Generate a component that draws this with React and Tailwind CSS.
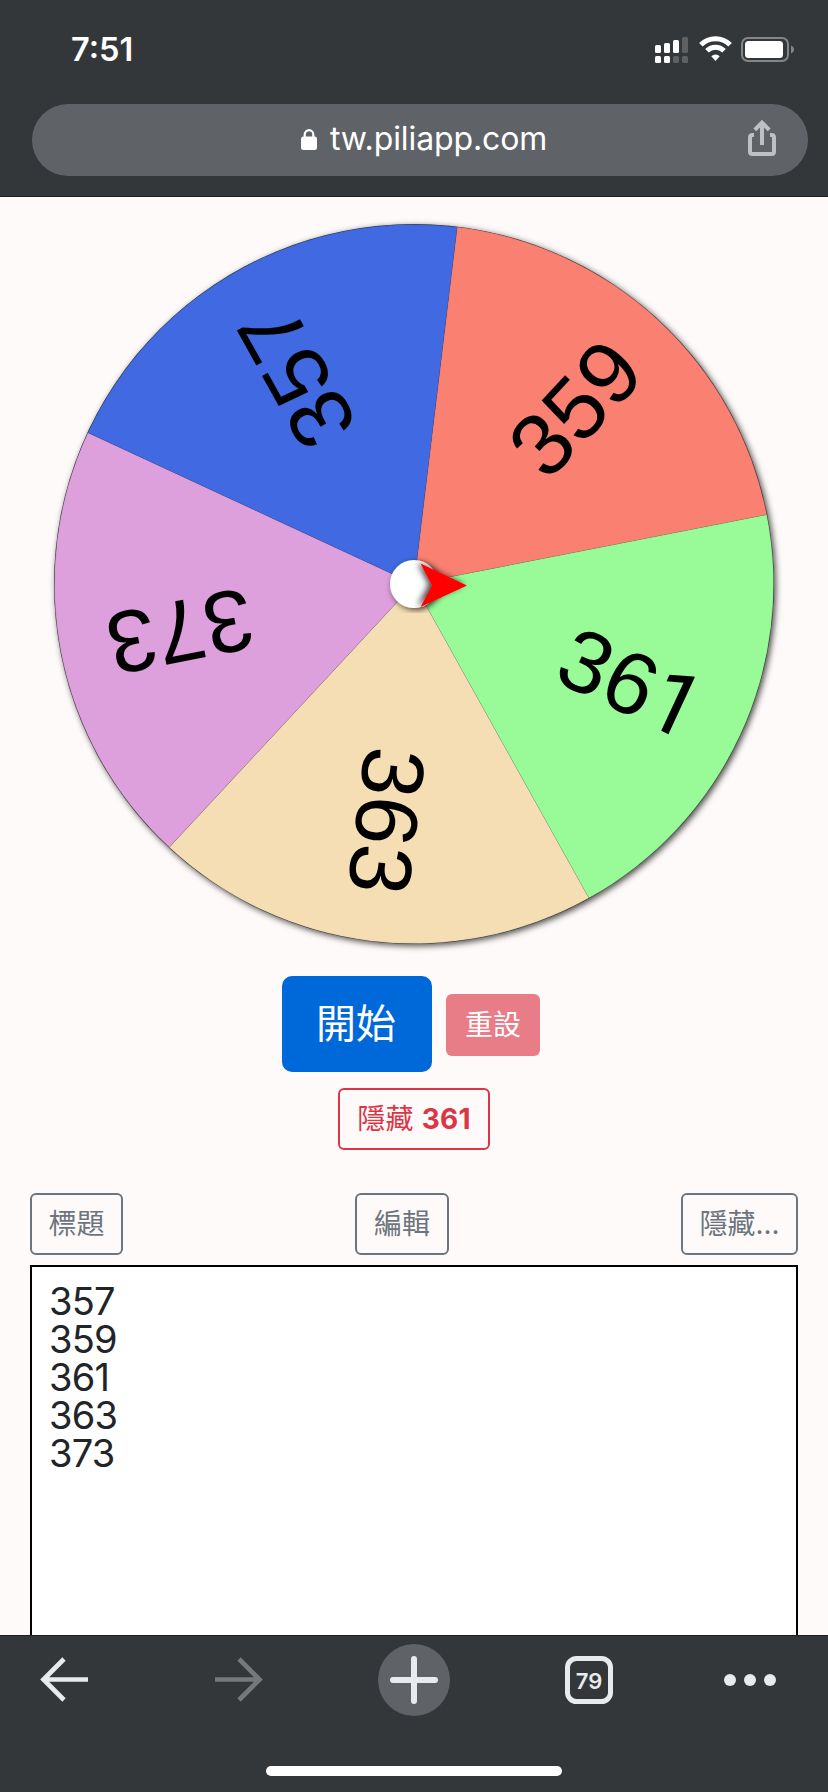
import React, { useState } from "react";

const SLICE_ANGLE = 72;
const START_ANGLE = -83.1;
const RADIUS = 360;
const LABEL_RADIUS = 238.5;

const slices = [
  { label: "359", color: "#fa8072" },
  { label: "361", color: "#98fb98" },
  { label: "363", color: "#f5deb3" },
  { label: "373", color: "#dda0dd" },
  { label: "357", color: "#4169e1" },
];

const polar = (angle, radius) => {
  const rad = (angle * Math.PI) / 180;
  return [radius * Math.cos(rad), radius * Math.sin(rad)];
};

const StatusBar = () => (
  <div className="flex h-[104px] items-start justify-between pl-[71px] pr-[34px]">
    <span className="mt-[30px] text-[32.5px] leading-10 font-semibold text-white">
      7:51
    </span>
    <svg className="mt-[34px]" width="140" height="32" viewBox="0 0 140 32">
      <g fill="#fff">
        <rect x="1" y="11" width="6" height="8" rx="1.5" />
        <rect x="10" y="9" width="6" height="10" rx="1.5" />
        <rect x="19" y="6" width="6" height="13" rx="1.5" />
        <rect x="1" y="22" width="6" height="7" rx="1.5" />
        <rect x="10" y="22" width="6" height="7" rx="1.5" />
      </g>
      <g fill="#5f6062">
        <rect x="28" y="3" width="6" height="16" rx="1.5" />
        <rect x="19" y="22" width="6" height="7" rx="1.5" />
        <rect x="28" y="22" width="6" height="7" rx="1.5" />
      </g>
      <g fill="none" stroke="#fff" strokeWidth="5">
        <path d="M46.900 10.800a20.500 20.500 0 0 1 29.200 0" />
        <path d="M53 16.800a12 12 0 0 1 17 0" />
      </g>
      <path d="M57.300 22.200a6 6 0 0 1 8.400 0L61.500 27z" fill="#fff" />
      <rect
        x="88"
        y="4"
        width="46"
        height="23"
        rx="6"
        fill="none"
        stroke="#838587"
        strokeWidth="2"
      />
      <rect x="91" y="7" width="38" height="17" rx="3.5" fill="#fff" />
      <path d="M137 11.500c4 1.500 4 6.500 0 8z" fill="#838587" />
    </svg>
  </div>
);

const AddressBar = () => (
  <div className="mr-5 ml-8 flex h-[72px] items-center rounded-full bg-[#5f6368]">
    <div className="flex flex-1 items-center gap-[13px] pl-[269px]">
      <svg width="16" height="22" viewBox="0 0 16 22">
        <path
          d="M3.700 10V5.500a4.300 4.300 0 0 1 8.600 0V10"
          fill="none"
          stroke="#fff"
          strokeWidth="2.200"
        />
        <rect y="7.500" width="16" height="13.500" rx="2.500" fill="#fff" />
      </svg>
      <span className="-mt-[2px] text-[32px] leading-10 tracking-[-0.1px] text-white">
        tw.piliapp.com
      </span>
    </div>
    <svg
      className="mr-8 -mt-1"
      width="28"
      height="36"
      viewBox="0 0 28 36"
      fill="none"
      stroke="#bdc1c6"
      strokeWidth="4"
    >
      <path d="M6 15H4.500Q2 15 2 17.500V31.500Q2 34 4.500 34H23.500Q26 34 26 31.500V17.500Q26 15 23.500 15H22" />
      <path d="M14 25V3M6.800 9.800L14 2.600L21.200 9.800" />
    </svg>
  </div>
);

const Wheel = () => (
  <svg
    className="block"
    width="828"
    height="780"
    viewBox="0 196 828 780"
    fontFamily="'Liberation Sans', Arial, sans-serif"
  >
    <defs>
      <filter id="wheelShadow" x="-10%" y="-10%" width="120%" height="120%">
        <feDropShadow
          dx="2"
          dy="2"
          stdDeviation="3"
          floodColor="#000"
          floodOpacity="0.7"
        />
      </filter>
      <filter id="pointerShadow" x="-50%" y="-50%" width="200%" height="200%">
        <feDropShadow
          dx="-3"
          dy="-1"
          stdDeviation="3"
          floodColor="#000"
          floodOpacity="0.75"
        />
      </filter>
    </defs>
    <g transform="translate(414 584)">
      <circle r={RADIUS} fill="#333" filter="url(#wheelShadow)" />
      {slices.map((slice, index) => {
        const from = START_ANGLE + index * SLICE_ANGLE;
        const [x1, y1] = polar(from, RADIUS - 0.5);
        const [x2, y2] = polar(from + SLICE_ANGLE, RADIUS - 0.5);
        return (
          <path
            key={slice.label}
            d={`M0 0L${x1} ${y1}A${RADIUS - 0.5} ${RADIUS - 0.5} 0 0 1 ${x2} ${y2}Z`}
            fill={slice.color}
            stroke="#000"
            strokeOpacity="0.12"
            strokeWidth="0.6"
          />
        );
      })}
      {slices.map((slice, index) => (
        <text
          key={slice.label}
          x={LABEL_RADIUS}
          y="29"
          fontSize="88"
          textAnchor="middle"
          transform={`rotate(${START_ANGLE + (index + 0.5) * SLICE_ANGLE})`}
        >
          {/* Roboto's 1 has no foot */}
          {slice.label.split("").map((digit, i) => (
            <tspan key={i} fontFamily={digit === "1" ? "Roboto" : undefined}>
              {digit}
            </tspan>
          ))}
        </text>
      ))}
      <circle r="24" fill="#fff" filter="url(#wheelShadow)" />
      <path
        d="M6.500 -20.500L53 1.500L6.500 23L18 1.500Z"
        fill="#f00"
        filter="url(#pointerShadow)"
      />
    </g>
  </svg>
);

const OutlineButton = ({ className, children }) => (
  <button
    className={`h-[62px] rounded-md border-2 border-[#6c757d] text-[28px] leading-10 text-[#6c757d] ${className}`}
  >
    {children}
  </button>
);

const Toolbar = () => (
  <div className="h-[157px] shrink-0 border-t border-[#1c1f20] bg-[#343739]">
    <svg className="block" width="828" height="156" viewBox="0 1636 828 156">
      <g fill="none" strokeWidth="4.700">
        <path
          d="M88 1679.500H43M64 1659L43.500 1679.500L64 1700"
          stroke="#e8eaed"
        />
        <path
          d="M215 1679.500H260M239 1659L259.500 1679.500L239 1700"
          stroke="#77787a"
        />
      </g>
      <circle cx="414" cy="1680" r="36" fill="#5f6368" />
      <path
        d="M414 1659V1701M393 1680H435"
        stroke="#e8eaed"
        strokeWidth="6"
        strokeLinecap="round"
      />
      <rect
        x="567.500"
        y="1658.500"
        width="43"
        height="43"
        rx="9"
        fill="none"
        stroke="#e8eaed"
        strokeWidth="5"
      />
      <text
        x="589"
        y="1689"
        textAnchor="middle"
        fontSize="22"
        fontWeight="600"
        fill="#e8eaed"
      >
        79
      </text>
      <g fill="#e8eaed">
        <circle cx="730" cy="1680" r="6" />
        <circle cx="750" cy="1680" r="6" />
        <circle cx="770" cy="1680" r="6" />
      </g>
      <rect x="266" y="1766" width="296" height="10" rx="5" fill="#fff" />
    </svg>
  </div>
);

const App = () => {
  const [items, setItems] = useState("357\n359\n361\n363\n373");

  return (
    <div className="flex h-[1792px] w-[828px] flex-col overflow-hidden bg-[#fffafa] font-[Inter,'Noto_Sans_CJK_TC',sans-serif]">
      <header className="h-[197px] shrink-0 border-b border-[#1c1f20] bg-[#343739]">
        <StatusBar />
        <AddressBar />
      </header>

      <main className="-mt-px flex min-h-0 flex-1 flex-col">
        <Wheel />
        <div className="flex items-center justify-center gap-[14px] pr-[6px]">
          <button className="h-24 w-[150px] rounded-[10px] bg-[#0069d9] pr-[2px] text-[40px] text-white">
            開始
          </button>
          <button className="mt-[2px] h-[62px] w-[94px] rounded-md bg-[#e87c87] text-[28px] text-white">
            重設
          </button>
        </div>
        <div className="mt-4 flex justify-center">
          <button className="h-[62px] w-[152px] rounded-md border-2 border-[#dc3545] text-[28px] tracking-[0.2px] whitespace-nowrap text-[#dc3545]">
            隱藏 <b>361</b>
          </button>
        </div>
        <div className="mx-[30px] mt-[43px] flex justify-between">
          <OutlineButton className="w-[93px]">標題</OutlineButton>
          <OutlineButton className="w-[94px]">編輯</OutlineButton>
          <OutlineButton className="w-[117px]">隱藏...</OutlineButton>
        </div>
        <textarea
          className="mx-[30px] mt-[10px] block flex-1 resize-none border-2 border-b-0 border-black bg-white px-[17px] py-[15px] text-[38px] leading-[38px] tracking-[-0.8px] text-[#212529] outline-none"
          value={items}
          onChange={(e) => setItems(e.target.value)}
        />
      </main>

      <Toolbar />
    </div>
  );
};

export default App;
